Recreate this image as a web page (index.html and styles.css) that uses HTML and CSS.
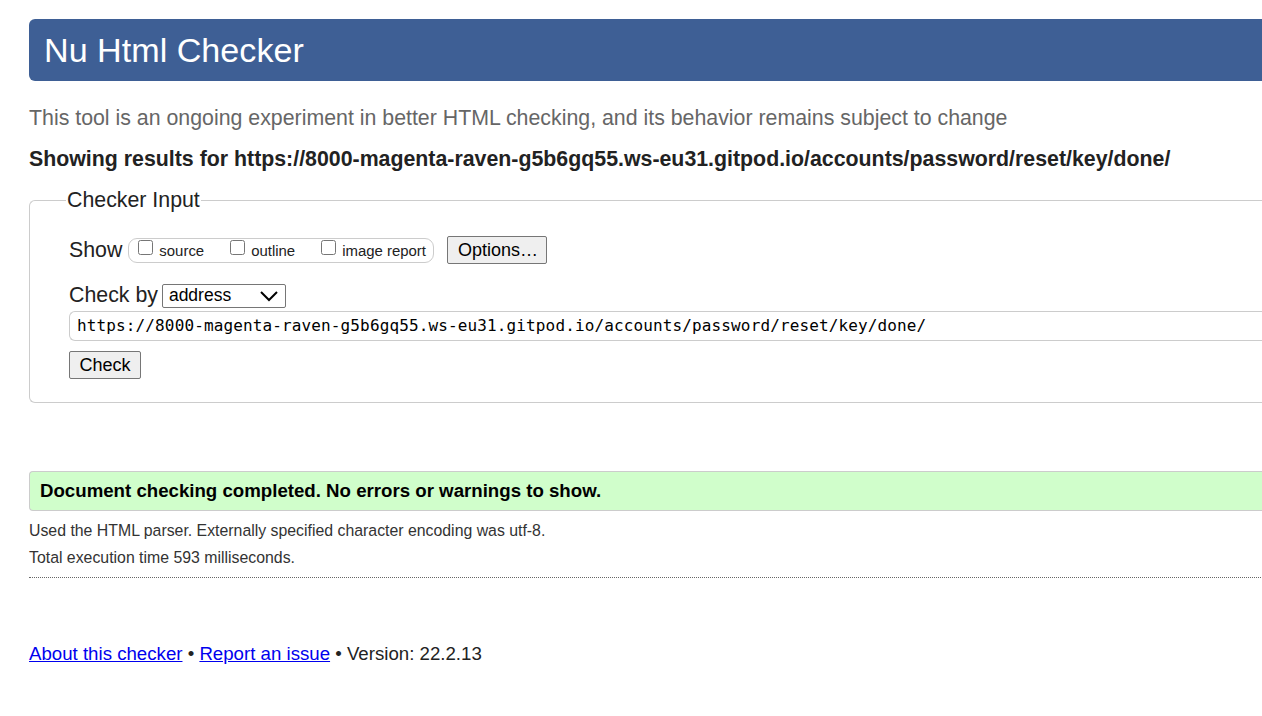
FILE: index.html
```html
<!DOCTYPE html>
<html lang="en">
<head>
<meta charset="utf-8">
<title>Showing results for https://8000-magenta-raven-g5b6gq55.ws-eu31.gitpod.io/accounts/password/reset/key/done/ - Nu Html Checker</title>
<link rel="stylesheet" href="styles.css">
</head>
<body>
<div class="page">
  <h1 class="title">Nu Html Checker</h1>
  <p class="intro">This tool is an ongoing experiment in better HTML checking, and its behavior remains subject to change</p>
  <p class="showing">Showing results for https://8000-magenta-raven-g5b6gq55.ws-eu31.gitpod.io/accounts/password/reset/key/done/</p>
  <form class="input-form">
    <fieldset class="fs">
      <legend class="legend">Checker Input</legend>
      <div class="row show-row">
        <span class="lbl">Show</span>
        <span class="pill">
          <label class="cb"><input type="checkbox"> source</label>
          <label class="cb"><input type="checkbox"> outline</label>
          <label class="cb"><input type="checkbox"> image report</label>
        </span>
        <button type="button" class="btn opts">Options…</button>
      </div>
      <div class="row by-row">
        <span class="lbl">Check by</span>
        <span class="select">address
          <svg class="chev" width="20" height="12" viewBox="0 0 20 12"><path d="M2 2 L10 10 L18 2" fill="none" stroke="#000" stroke-width="2"/></svg>
        </span>
      </div>
      <div class="url">https://8000-magenta-raven-g5b6gq55.ws-eu31.gitpod.io/accounts/password/reset/key/done/</div>
      <div class="row check-row"><button type="button" class="btn check">Check</button></div>
    </fieldset>
  </form>
  <div class="success">Document checking completed. No errors or warnings to show.</div>
  <p class="details">Used the HTML parser. Externally specified character encoding was utf-8.</p>
  <p class="details">Total execution time 593 milliseconds.</p>
  <hr class="sep">
  <p class="footer"><a href="#">About this checker</a> • <a href="#">Report an issue</a> • Version: 22.2.13</p>
</div>
</body>
</html>
```

FILE: styles.css
```css
html { overflow: hidden; }
body {
  margin: 0;
  font-family: "Liberation Sans", Arial, sans-serif;
  color: #222;
  background: #fff;
}
.page {
  width: 1300px;
  padding: 19px 0 0 29px;
}
.title {
  margin: 0;
  height: 62px;
  box-sizing: border-box;
  background: #3e5f95;
  color: #fff;
  font-weight: normal;
  font-size: 34.13px;
  line-height: 62px;
  padding-left: 15px;
  border-radius: 6px 0 0 6px;
}
.intro {
  margin: 25px 0 0;
  font-size: 21.33px;
  line-height: 24px;
  color: #666;
}
.showing {
  margin: 17px 0 0;
  font-size: 21.33px;
  line-height: 24px;
  font-weight: bold;
  color: #222;
}
.input-form { margin: 17px 0 0; }
.fs {
  margin: 0;
  border: 1px solid #ccc;
  border-right: none;
  border-radius: 6px 0 0 6px;
  padding: 12px 0 23px 39px;
  min-width: 0;
}
.legend {
  font-size: 21.33px;
  padding: 0 1px;
  margin-left: -3px;
  line-height: 24px;
}
.row {
  display: flex;
  align-items: center;
}
.lbl { font-size: 21.33px; color: #222; }
.show-row { margin-top: 12px; }
.pill {
  display: inline-flex;
  align-items: center;
  margin-left: 6px;
  height: 25px;
  box-sizing: border-box;
  border: 1px solid #ccc;
  border-radius: 9px;
  padding: 0 7px 0 9px;
  font-size: 14.93px;
}
.cb {
  display: inline-flex;
  align-items: center;
  margin-right: 26px;
  color: #222;
}
.cb:last-child { margin-right: 0; }
.cb input {
  margin: -6px 6px 0 0;
  width: 15px;
  height: 15px;
}
.btn {
  font-family: "Liberation Sans", Arial, sans-serif;
  font-size: 18px;
  background: #efefef;
  border: 1px solid #767676;
  border-radius: 2px;
  color: #000;
  padding: 0 10px;
  height: 28px;
}
.opts { margin-left: 13px; width: 100px; }
.by-row { margin-top: 19px; }
.select {
  margin-left: 4px;
  display: inline-flex;
  align-items: center;
  justify-content: space-between;
  width: 124px;
  height: 24px;
  box-sizing: border-box;
  border: 1px solid #767676;
  border-radius: 2px;
  font-size: 17.5px;
  padding: 0 6px 0 6px;
  color: #000;
}
.chev { margin-top: 1px; }
.url {
  margin-top: 3px;
  height: 30px;
  box-sizing: border-box;
  border: 1px solid #ccc;
  border-right: none;
  border-radius: 6px 0 0 6px;
  font-family: "DejaVu Sans Mono", "Liberation Mono", monospace;
  font-size: 16px;
  letter-spacing: 0.13px;
  line-height: 28px;
  padding-left: 7px;
  color: #000;
  white-space: nowrap;
  overflow: hidden;
}
.check-row { margin-top: 10px; }
.check { width: 72px; padding: 0; }
.success {
  margin-top: 68px;
  height: 40px;
  box-sizing: border-box;
  background: #d0fecb;
  border: 1px solid #ccc;
  border-right: none;
  border-radius: 4px 0 0 4px;
  font-size: 18.67px;
  font-weight: bold;
  line-height: 38px;
  padding-left: 10px;
  color: #000;
}
.details {
  margin: 11px 0 0;
  font-size: 15.85px;
  line-height: 17px;
  color: #333;
}
.details + .details { margin-top: 10px; }
.sep {
  margin: 11px 0 0;
  border: none;
  border-top: 1px dotted #666;
  height: 0;
}
.footer {
  margin: 65px 0 0;
  font-size: 18.67px;
  line-height: 22px;
  color: #222;
}
.footer a { color: #00e; }
```
